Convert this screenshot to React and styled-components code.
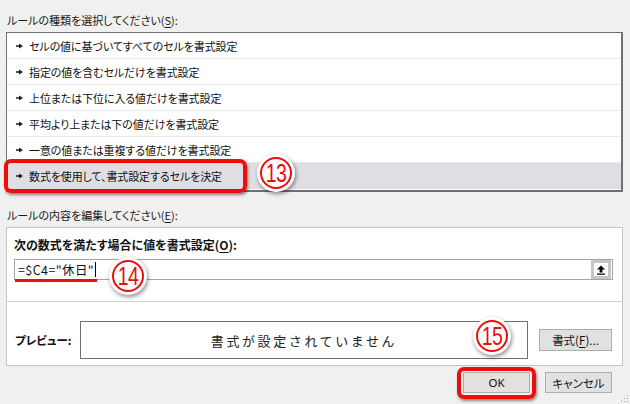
import React from "react";
import styled, { createGlobalStyle } from "styled-components";

const GlobalStyle = createGlobalStyle`
  html, body {
    margin: 0;
    padding: 0;
    background: #f0f0f0;
  }
  body {
    font-family: "Noto Sans CJK JP", "Noto Sans", sans-serif;
    font-feature-settings: "palt";
    color: #111;
  }
`;

const RULES = [
  "セルの値に基づいてすべてのセルを書式設定",
  "指定の値を含むセルだけを書式設定",
  "上位または下位に入る値だけを書式設定",
  "平均より上または下の値だけを書式設定",
  "一意の値または重複する値だけを書式設定",
  "数式を使用して、書式設定するセルを決定",
];

const Page = styled.div`
  position: relative;
  width: 630px;
  height: 404px;
  box-sizing: border-box;
  padding: 13px 7px 0 6px;
  display: flex;
  flex-direction: column;
  overflow: hidden;
`;

const Label = styled.div`
  font-size: 11px;
  line-height: 14px;
  height: 14px;
  padding-left: 1px;
  margin-top: ${(p) => p.$top || 0}px;
  margin-bottom: 5px;
  white-space: nowrap;
  color: #1a1a1a;
`;

const Key = styled.span`
  text-decoration: underline;
  text-underline-offset: 2px;
`;

const ListBox = styled.div`
  height: 160px;
  box-sizing: border-box;
  background: #fff;
  border-style: solid;
  border-color: #6e7073;
  border-width: 1px 2px 2px 1px;
  display: flex;
  flex-direction: column;
`;

const Row = styled.div`
  height: 26px;
  flex: 0 0 26px;
  box-sizing: border-box;
  display: flex;
  align-items: center;
  gap: 6px;
  padding-left: 9px;
  font-size: 11px;
  letter-spacing: -0.1px;
  background: ${(p) => (p.$selected ? "#dfdfe3" : "#fff")};
  border-bottom: ${(p) => (p.$last ? "none" : "1px solid #ebebeb")};
  white-space: nowrap;
`;

const Bullet = () => (
  <svg width="7" height="6" viewBox="0 0 7 6">
    <polygon
      points="0,2.3 3,2.3 3,0.4 7,3 3,5.6 3,3.7 0,3.7"
      fill="#1c1c1c"
    />
  </svg>
);

const Group = styled.div`
  height: 139px;
  box-sizing: border-box;
  background: #fff;
  border: 1px solid #c4c4c4;
  display: flex;
  flex-direction: column;
`;

const GroupTop = styled.div`
  padding: 10px 9px 21px 7px;
  display: flex;
  flex-direction: column;
  gap: 7px;
`;

const BoldLabel = styled.div`
  font-size: 12px;
  font-weight: 700;
  line-height: 14px;
  white-space: nowrap;
`;

const FormulaBox = styled.div`
  height: 21px;
  box-sizing: border-box;
  border: 1px solid #a6a6a6;
  display: flex;
  align-items: center;
  justify-content: space-between;
`;

const Formula = styled.div`
  font-family: "Noto Sans CJK JP", sans-serif;
  font-feature-settings: normal;
  font-size: 12.5px;
  letter-spacing: 0.4px;
  padding-left: 3px;
  display: flex;
  align-items: center;
`;

const Caret = styled.span`
  display: inline-block;
  width: 1px;
  height: 15px;
  background: #000;
  margin-left: 1px;
`;

const CollapseButton = styled.div`
  width: 20px;
  height: 19px;
  box-sizing: border-box;
  border: 3px solid #c6c6c6;
  background: #fff;
  display: flex;
  align-items: center;
  justify-content: center;
  margin-right: 1px;
`;

const UpIcon = () => (
  <svg width="10" height="10" viewBox="0 0 10 10">
    <polygon points="5,0.5 9,4.5 6.4,4.5 6.4,7.5 3.6,7.5 3.6,4.5 1,4.5" fill="#000" />
    <rect x="1" y="8.5" width="8" height="1.2" fill="#000" />
  </svg>
);

const Divider = styled.div`
  height: 1px;
  background: #cfcfcf;
`;

const PreviewRow = styled.div`
  padding: 19px 0 6px 8px;
  display: flex;
  align-items: center;
`;

const PreviewLabel = styled.div`
  width: 65px;
  font-size: 11.5px;
  font-weight: 700;
  white-space: nowrap;
`;

const PreviewBox = styled.div`
  width: 448px;
  height: 38px;
  box-sizing: border-box;
  border: 1px solid #6f6f6f;
  display: flex;
  align-items: center;
  justify-content: center;
  font-size: 13px;
  letter-spacing: 2.6px;
  font-feature-settings: normal;
  color: #222;
`;

const Button = styled.div`
  width: ${(p) => p.$w || 67}px;
  height: ${(p) => p.$h || 21}px;
  box-sizing: border-box;
  background: #e1e1e1;
  border: 1px solid #adadad;
  display: flex;
  align-items: center;
  justify-content: center;
  font-size: 11.5px;
  white-space: nowrap;
  margin-left: ${(p) => p.$ml || 0}px;
`;

const Footer = styled.div`
  margin-top: 6px;
  padding-right: 11px;
  display: flex;
  justify-content: flex-end;
  gap: 15px;
`;

const OkText = styled.span`
  font-family: "Noto Sans", sans-serif;
`;

const RedFrame = styled.div`
  position: absolute;
  left: ${(p) => p.$x}px;
  top: ${(p) => p.$y}px;
  width: ${(p) => p.$w}px;
  height: ${(p) => p.$h}px;
  box-sizing: border-box;
  border: 4px solid #ee0c0c;
  border-radius: 7px;
  box-shadow: 1px 2px 3px rgba(0, 0, 0, 0.45);
`;

const RedLine = styled.div`
  position: absolute;
  left: 15px;
  top: 279px;
  width: 82px;
  height: 3px;
  background: #ee0c0c;
`;

const Badge = styled.div`
  position: absolute;
  left: ${(p) => p.$x - 19}px;
  top: ${(p) => p.$y - 19}px;
  width: 38px;
  height: 38px;
  border-radius: 50%;
  background: #fff;
  box-shadow: 1px 2px 4px rgba(0, 0, 0, 0.45);
  display: flex;
  align-items: center;
  justify-content: center;
`;

const BadgeRing = styled.div`
  width: 32px;
  height: 32px;
  box-sizing: border-box;
  border-radius: 50%;
  border: 2px solid #ee0c0c;
  display: flex;
  align-items: center;
  justify-content: center;
  overflow: hidden;
`;

const BadgeDigits = styled.span`
  display: inline-block;
  color: #ee0c0c;
  font-family: "Liberation Sans", sans-serif;
  font-size: 25px;
  line-height: 25px;
  letter-spacing: -1px;
  transform: scaleX(0.78);
  margin-right: 1px;
`;

const Grip = styled.div`
  position: absolute;
  right: 2px;
  bottom: 2px;
  width: 8px;
  height: 8px;
  background-image: radial-gradient(circle, #a0a0a0 0.8px, transparent 1px);
  background-size: 3px 3px;
  clip-path: polygon(100% 0, 100% 100%, 0 100%);
`;

export default function App() {
  return (
    <>
      <GlobalStyle />
      <Page>
        <Label>
          ルールの種類を選択してください(<Key>S</Key>):
        </Label>
        <ListBox>
          {RULES.map((r, i) => (
            <Row key={r} $selected={i === 5} $last={i === 5}>
              <Bullet />
              {r}
            </Row>
          ))}
        </ListBox>

        <Label $top={16}>
          ルールの内容を編集してください(<Key>E</Key>):
        </Label>
        <Group>
          <GroupTop>
            <BoldLabel>
              次の数式を満たす場合に値を書式設定(<Key>O</Key>):
            </BoldLabel>
            <FormulaBox>
              <Formula>
                =$C4="休日"
                <Caret />
              </Formula>
              <CollapseButton>
                <UpIcon />
              </CollapseButton>
            </FormulaBox>
          </GroupTop>
          <Divider />
          <PreviewRow>
            <PreviewLabel>プレビュー:</PreviewLabel>
            <PreviewBox>書式が設定されていません</PreviewBox>
            <Button $w={73} $h={22} $ml={11}>
              書式(<Key>F</Key>)...
            </Button>
          </PreviewRow>
        </Group>

        <Footer>
          <Button>
            <OkText>OK</OkText>
          </Button>
          <Button>キャンセル</Button>
        </Footer>

        <RedFrame $x={4} $y={159} $w={243} $h={34} />
        <Badge $x={276} $y={173}>
          <BadgeRing>
            <BadgeDigits>13</BadgeDigits>
          </BadgeRing>
        </Badge>
        <RedLine />
        <Badge $x={128} $y={276}>
          <BadgeRing>
            <BadgeDigits>14</BadgeDigits>
          </BadgeRing>
        </Badge>
        <Badge $x={492} $y={336}>
          <BadgeRing>
            <BadgeDigits>15</BadgeDigits>
          </BadgeRing>
        </Badge>
        <RedFrame $x={457} $y={367} $w={79} $h={32} />
        <Grip />
      </Page>
    </>
  );
}
